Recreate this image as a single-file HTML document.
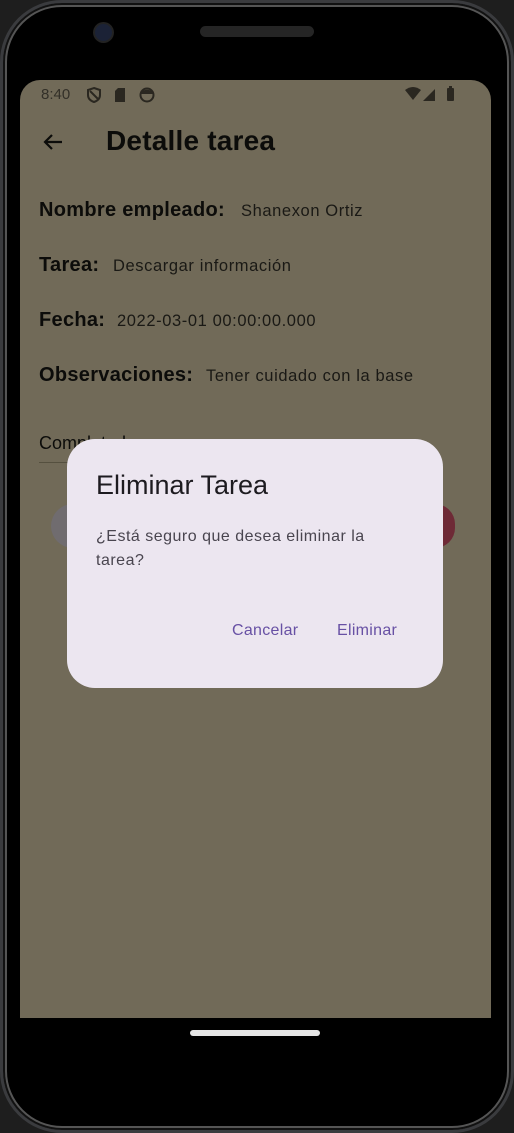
<!DOCTYPE html>
<html><head><style>
*{margin:0;padding:0;box-sizing:border-box}
body{width:514px;height:1133px;background:#1e1e1e;position:relative;overflow:hidden;font-family:"Liberation Sans",sans-serif}
.phone{position:absolute;left:0;top:0;width:514px;height:1133px;border-radius:62px;background:#000;border:3px solid #3a3b3e;box-shadow:inset 0 0 0 2px #111,inset 0 0 0 4px #555}
.screen{position:absolute;left:20px;top:80px;width:471px;height:938px;background:#716a58;border-radius:20px 20px 0 0;overflow:hidden}
.t{position:absolute;color:#0c0c0a;white-space:nowrap}
.b{font-weight:bold;font-size:20px;letter-spacing:0.3px}
.v{font-size:16.5px;color:#1a1915;letter-spacing:0.6px}
</style></head><body>
<div class="phone"></div>
<div style="position:absolute;left:95px;top:24px;width:17px;height:17px;border-radius:50%;background:#1b2236;box-shadow:0 0 0 2px #222"></div>
<div style="position:absolute;left:200px;top:26px;width:114px;height:11px;border-radius:6px;background:#252525"></div>
<div class="screen">
 <div class="t" style="left:21px;top:6px;font-size:15px;color:#333028">8:40</div>
 <svg style="position:absolute;left:66px;top:6px" width="80" height="18" viewBox="0 0 80 18">
  <path d="M8 2 L14 4 V9 C14 13 11 15 8 16 C5 15 2 13 2 9 V4 Z M4 5 L12 13" fill="none" stroke="#2a2720" stroke-width="2"/>
  <path d="M32 2 H39 V16 H29 V5 Z" fill="#2a2720"/>
  <circle cx="61" cy="9" r="6.5" fill="none" stroke="#2a2720" stroke-width="2"/>
  <path d="M55 8 H67 V6 C64 3 58 3 55 6Z" fill="#2a2720"/>
 </svg>
 <svg style="position:absolute;left:384px;top:5px" width="60" height="18" viewBox="0 0 60 18">
  <path d="M1 5 Q9 -1 17 5 L9 15 Z" fill="#2a2720"/>
  <path d="M19 16 L31 4 V16 Z" fill="#2a2720"/>
  <rect x="43" y="3" width="7" height="13" rx="1" fill="#2a2720"/><rect x="45" y="1" width="3" height="3" fill="#2a2720"/>
 </svg>
 <svg style="position:absolute;left:22px;top:52px" width="22" height="20" viewBox="0 0 22 20"><path d="M20 10 H3 M10 3 L3 10 L10 17" fill="none" stroke="#0c0c0a" stroke-width="2.2"/></svg>
 <div class="t" style="left:86px;top:45px;font-size:28px;font-weight:bold;letter-spacing:0.2px">Detalle tarea</div>
 <div class="t b" style="left:19px;top:119px">Nombre empleado:</div><div class="t v" style="left:221px;top:122px">Shanexon Ortiz</div>
 <div class="t b" style="left:19px;top:174px">Tarea:</div><div class="t v" style="left:93px;top:177px">Descargar información</div>
 <div class="t b" style="left:19px;top:229px">Fecha:</div><div class="t v" style="left:97px;top:232px">2022-03-01 00:00:00.000</div>
 <div class="t b" style="left:19px;top:284px">Observaciones:</div><div class="t v" style="left:186px;top:287px">Tener cuidado con la base</div>
 <div class="t" style="left:19px;top:353px;font-size:18px">Completado</div>
 <div style="position:absolute;left:19px;top:382px;width:120px;height:1px;background:#55503f"></div>
 <div style="position:absolute;left:31px;top:424px;width:50px;height:44px;border-radius:22px;background:#706c6f"></div>
 <div style="position:absolute;left:395px;top:424px;width:40px;height:44px;border-radius:22px;background:#6e2a36"></div>
 <div style="position:absolute;left:47px;top:359px;width:376px;height:249px;border-radius:28px;background:#ece6f0">
  <div class="t" style="left:29px;top:31px;font-size:27px;color:#1d1b20">Eliminar Tarea</div>
  <div style="position:absolute;left:29px;top:86px;width:300px;font-size:16px;line-height:24px;color:#49454f;letter-spacing:0.5px">¿Está seguro que desea eliminar la tarea?</div>
  <div class="t" style="left:165px;top:183px;font-size:16px;color:#6750a4;letter-spacing:0.3px">Cancelar</div>
  <div class="t" style="left:270px;top:183px;font-size:16px;color:#6750a4;letter-spacing:0.3px">Eliminar</div>
 </div>
</div>
<div style="position:absolute;left:190px;top:1030px;width:130px;height:6px;border-radius:3px;background:#e6e6e6"></div>
</body></html>
